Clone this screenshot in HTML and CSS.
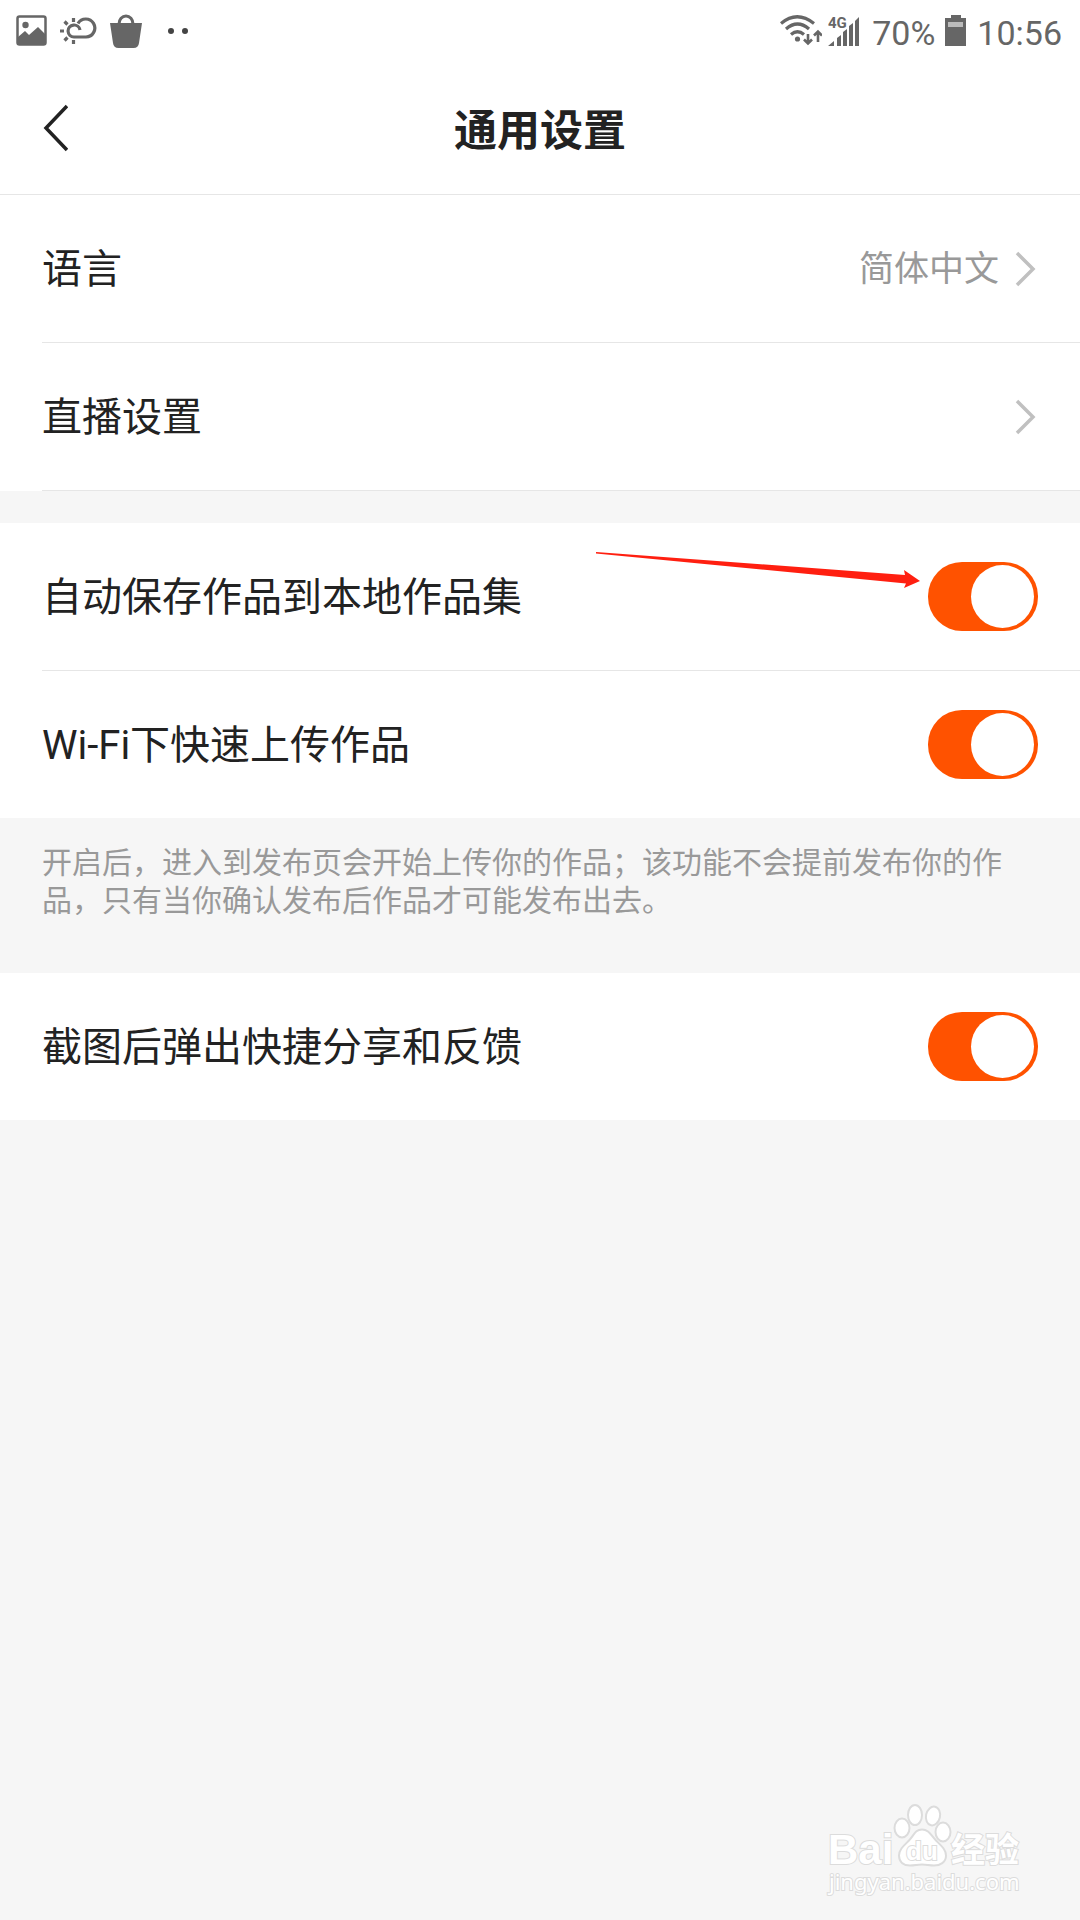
FILE: index.html
```html
<!DOCTYPE html>
<html lang="zh-CN">
<head>
  <meta charset="UTF-8">
  <meta name="viewport" content="width=device-width, initial-scale=1">
  <title>通用设置</title>
  <link rel="stylesheet" href="styles.css">
</head>
<body>
  <div class="statusbar">
    <div class="status-left">
      <svg width="32" height="32" viewBox="0 0 32 32">
        <rect x="1.5" y="1.5" width="28" height="28" rx="2" fill="none" stroke="#666" stroke-width="2.5"/>
        <circle cx="9.500" cy="10" r="3.200" fill="#666"/>
        <path d="M2 22l7-6 4 4 9-8 8 8v9H2z" fill="#666"/>
      </svg>
      <svg width="38" height="32" viewBox="0 0 38 32">
        <g fill="none" stroke="#666" stroke-width="3.200">
          <path d="M18 8.500a9 9 0 1 1 8 13.500H14a6 6 0 1 1 6-7"/>
          <path d="M13.500 3v4M4.500 6.500l3 3M0 16h4M4.500 25.500l3-3M13.500 25v4"/>
        </g>
      </svg>
      <svg width="32" height="34" viewBox="0 0 32 34">
        <path d="M0 9h32l-3 20q-.6 5-5.500 5h-15q-4.900 0-5.500-5z" fill="#666"/>
        <path d="M9 10a7 8 0 0 1 14 0" fill="none" stroke="#666" stroke-width="3"/>
      </svg>
      <svg class="more" width="20" height="32" viewBox="0 0 20 32">
        <circle cx="3" cy="16" r="3" fill="#444"/>
        <circle cx="17" cy="16" r="3" fill="#444"/>
      </svg>
    </div>
    <div class="status-right">
      <div class="signals">
        <svg width="42" height="34" viewBox="0 0 42 34">
          <g fill="none" stroke="#666" stroke-width="3.200">
            <path d="M1 9.500q16-13.500 33 0M6 15q11.500-10 23 0M11 20.500q6.500-5.500 13 0"/>
            <path d="M28 20v10M24 25.500l4 4 4-4M38 28v-10M34 21.500l4-4 4 4" stroke-width="2.600"/>
          </g>
          <circle cx="17.500" cy="25" r="2.600" fill="#666"/>
        </svg>
        <svg width="32" height="34" viewBox="0 0 32 34">
          <text x="0" y="14" class="network">4G</text>
          <path d="M0 32l6-5v5zM9 24l4-3v11H9zM15 18l4-3v17h-4zM21 12l4-3v23h-4zM27 7l4-4v29h-4z" fill="#666"/>
        </svg>
      </div>
      <span>70%</span>
      <svg width="22" height="34" viewBox="0 0 22 34">
        <path d="M6 1h10v3h5v28H0V4h6z" fill="#666"/>
        <path d="M3 8h15v5H3z" fill="#bbb"/>
      </svg>
      <span>10:56</span>
    </div>
  </div>

  <header class="header">
    <button class="back" aria-label="返回">
      <svg width="26" height="48" viewBox="0 0 26 48">
        <path d="M25 2L4 24l21 22" fill="none" stroke="#222" stroke-width="3.500"/>
      </svg>
    </button>
    <h1>通用设置</h1>
  </header>

  <main>
    <section class="group">
      <a class="row" href="#language">
        <span class="label">语言</span>
        <span class="value">简体中文</span>
        <svg class="chevron" width="24" height="36" viewBox="0 0 24 36">
          <path d="M3 2l16 16L3 34" fill="none" stroke="#c0c0c0" stroke-width="3.500"/>
        </svg>
      </a>
      <a class="row line" href="#live">
        <span class="label">直播设置</span>
        <svg class="chevron" width="24" height="36" viewBox="0 0 24 36">
          <path d="M3 2l16 16L3 34" fill="none" stroke="#c0c0c0" stroke-width="3.500"/>
        </svg>
      </a>
    </section>

    <section class="group spaced">
      <div class="row">
        <label class="label" for="autosave">自动保存作品到本地作品集</label>
        <input class="switch" type="checkbox" id="autosave" checked>
        <svg class="pointer" width="324" height="40" viewBox="0 0 324 40">
          <path d="M0 4l309 23-1-5 16 11-16 7 2-4.500L0 5.500z" fill="#ff1f10"/>
        </svg>
      </div>
      <div class="row">
        <label class="label" for="wifi">Wi-Fi下快速上传作品</label>
        <input class="switch" type="checkbox" id="wifi" checked>
      </div>
    </section>

    <p class="note">开启后，进入到发布页会开始上传你的作品；该功能不会提前发布你的作品，只有当你确认发布后作品才可能发布出去。</p>

    <section class="group">
      <div class="row">
        <label class="label" for="feedback">截图后弹出快捷分享和反馈</label>
        <input class="switch" type="checkbox" id="feedback" checked>
      </div>
    </section>
  </main>

  <svg class="watermark" width="210" height="100" viewBox="0 0 210 100">
    <g fill="#fff" stroke="#dcdcdc" stroke-width="2">
      <text x="8" y="64" class="brand">Bai</text>
      <text x="131" y="62" class="brand-cn">经验</text>
      <text x="9" y="90" class="site">jingyan.baidu.com</text>
      <ellipse cx="82" cy="28" rx="7.500" ry="9.500"/>
      <ellipse cx="95" cy="15" rx="7" ry="10"/>
      <ellipse cx="113" cy="16" rx="7" ry="9.500" transform="rotate(12 113 16)"/>
      <ellipse cx="123" cy="32" rx="7.500" ry="9.500"/>
      <path d="M102 29.500c7 0 9 6 14 11s10 9 10 15c0 7-6 10-12 10-5 0-7-1-12-1s-7 1-12 1c-6 0-11-3-11-10 0-6 5-10 10-15s6-11 13-11z"/>
      <text x="86" y="60" class="du">du</text>
    </g>
  </svg>
</body>
</html>
```

FILE: styles.css
```css
* {
  box-sizing: border-box;
}

body {
  position: relative;
  min-height: 100vh;
  margin: 0;
  background: #f6f6f6;
  color: #222;
  font-family: Roboto, "Noto Sans CJK SC", sans-serif;
}

svg {
  display: block;
  flex-shrink: 0;
}

.statusbar {
  display: flex;
  justify-content: space-between;
  align-items: center;
  height: 62px;
  padding: 0 18px 0 16px;
  background: #fff;
  color: #666;
  font-size: 34px;
  line-height: 40px;
}

.status-left {
  display: flex;
  align-items: center;
  gap: 12px;
}

.more {
  margin-left: 14px;
}

.status-right {
  display: flex;
  align-items: center;
  gap: 10px;
}

.status-right span {
  padding-top: 4px;
}

.signals {
  display: flex;
  gap: 6px;
  padding-right: 2px;
}

.network {
  font-size: 15px;
  font-weight: bold;
  fill: #666;
}

.header {
  display: grid;
  grid-template-columns: 1fr auto 1fr;
  align-items: center;
  height: 133px;
  padding: 0 42px;
  background: #fff;
  border-bottom: 1px solid #e6e6e6;
}

.header h1 {
  margin: 0;
  padding-top: 5px;
  font-size: 43px;
  line-height: 60px;
  font-weight: bold;
}

.back {
  justify-self: start;
  padding: 0;
  border: 0;
  background: none;
  cursor: pointer;
}

.group {
  padding-left: 42px;
  background: #fff;
}

.spaced {
  margin-top: 32px;
}

.row {
  position: relative;
  display: flex;
  align-items: center;
  min-height: 147px;
  padding-right: 42px;
  color: #222;
  text-decoration: none;
}

.row:not(:last-child),
.line {
  min-height: 148px;
  border-bottom: 1px solid #e6e6e6;
}

.label {
  flex: 1;
  padding-top: 2px;
  font-size: 40px;
  line-height: 60px;
}

.value {
  padding-top: 2px;
  color: #999;
  font-size: 35px;
  line-height: 60px;
}

.chevron {
  margin-left: 15px;
}

.switch {
  appearance: none;
  display: flex;
  align-items: center;
  justify-content: flex-end;
  width: 110px;
  height: 69px;
  margin: 0;
  padding: 0 4px;
  border-radius: 34px;
  background: #ddd;
  cursor: pointer;
}

.switch::before {
  content: "";
  width: 63px;
  height: 63px;
  border-radius: 50%;
  background: #fff;
}

.switch:checked {
  background: #ff5200;
}

.switch:not(:checked) {
  justify-content: flex-start;
}

/* arrow drawn over the row, ends beside the switch */
.pointer {
  position: absolute;
  top: 25px;
  right: 160px;
  pointer-events: none;
}

.note {
  margin: 0;
  padding: 26px 48px 53px 42px;
  color: #999;
  font-size: 30px;
  line-height: 38px;
}

.watermark {
  position: absolute;
  right: 50px;
  bottom: 20px;
}

.watermark text {
  paint-order: stroke;
}

.brand {
  font: bold 42px "Liberation Sans", sans-serif;
}

.brand-cn {
  font: bold 34px "Noto Sans CJK SC", sans-serif;
}

.site {
  font: 22px "Noto Sans", sans-serif;
}

.du {
  font: bold 26px "Liberation Sans", sans-serif;
}
```
